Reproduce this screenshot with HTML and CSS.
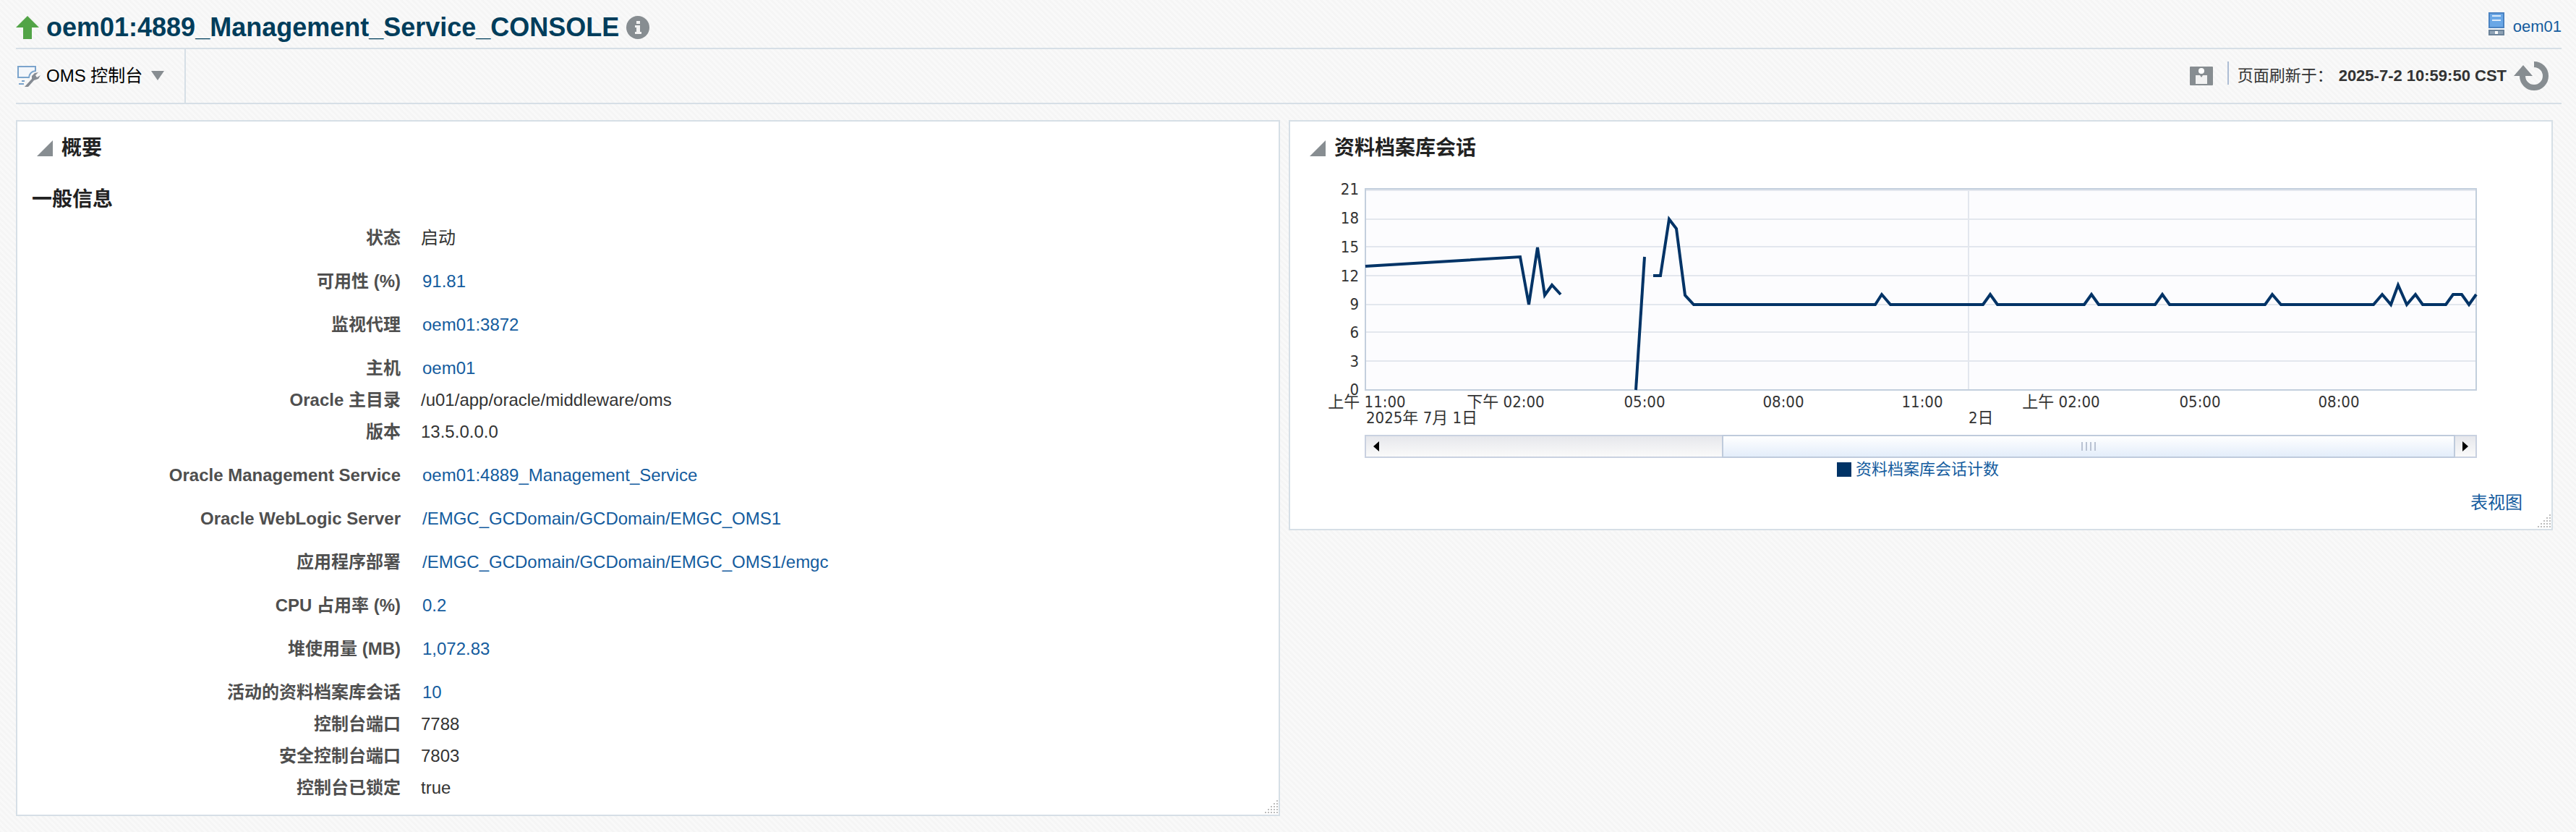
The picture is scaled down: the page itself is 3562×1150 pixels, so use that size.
FILE: index.html
```html
<!doctype html>
<html lang="zh-CN">
<head>
<meta charset="utf-8">
<title>oem01:4889_Management_Service_CONSOLE</title>
<link rel="stylesheet" href="styles.css">
</head>

<body>
<div id="page">
    <div class="header">
        <div class="title">
            <svg width="32" height="32" viewBox="0 0 32 32"><path d="M16 0L32 16H22V32H10V16H0Z" fill="#52a447"/></svg>
            <h1>oem01:4889_Management_Service_CONSOLE</h1>
            <button type="button" class="info" aria-label="目标信息">
                <svg width="32" height="32" viewBox="0 0 32 32"><circle cx="16" cy="16" r="16" fill="#878d91"/><path d="M14 7h5v4h-5zM12 13h7v9h2v3h-9v-3h2v-6h-2z" fill="#f3f3f3"/></svg>
            </button>
        </div>
        <a class="host" href="#">
            <svg width="22" height="32" viewBox="0 0 22 32">
                <rect x="1" y="1" width="20" height="20" fill="#6aa7e6" stroke="#4b83c2" stroke-width="2"/>
                <path d="M5 5h12M5 11h12" stroke="#dcebfa" stroke-width="2"/>
                <rect x="1" y="25" width="20" height="6" fill="#8ea2b5" stroke="#6a8299" stroke-width="2"/>
                <rect x="9" y="26" width="4" height="4" fill="#fff"/>
            </svg>
            <span>oem01</span>
        </a>
    </div>

    <div class="toolbar">
        <button type="button" class="menu">
            <svg width="34" height="32" viewBox="0 0 34 32">
                <path d="M17 18H3V3H27V9Q19 10 18 18Z" fill="#f3f6fa" stroke="#7ba4cc" stroke-width="2"/>
                <path d="M4 27H11M8 23H12" stroke="#7ba4cc" stroke-width="2"/>
                <path d="M12 31L22 20V16L26 12L31 11L27 15L29 18L34 15L31 20L25 22L17 31Z" fill="#858b93"/>
            </svg>
            <span>OMS 控制台</span>
            <svg class="caret" width="18" height="14" viewBox="0 0 18 14"><path d="M0 0H18L9 13Z" fill="#878d91"/></svg>
        </button>
        <div class="refresh">
            <button type="button" class="badge" aria-label="个性化页面">
                <svg width="32" height="28" viewBox="0 0 32 28">
                    <rect y="1" width="32" height="26" rx="1" fill="#878d91"/>
                    <circle cx="16" cy="7" r="4" fill="#fff"/>
                    <path d="M8 13h6l2 3 2-3h6v12h-16z" fill="#f2f2f2"/>
                </svg>
            </button>
            <span class="sep"></span>
            <span>页面刷新于：</span>
            <b>2025-7-2 10:59:50 CST</b>
            <button type="button" class="reload" aria-label="刷新">
                <svg width="48" height="42" viewBox="0 0 48 42">
                    <path d="M28 5A16 16 0 1 1 12 21" fill="none" stroke="#878d91" stroke-width="8"/>
                    <path d="M0 21L13 6L26 21Z" fill="#878d91"/>
                </svg>
            </button>
        </div>
    </div>

    <div class="panels">
        <div class="panel">
            <h2><svg width="22" height="22" viewBox="0 0 22 22"><path d="M22 0V22H0Z" fill="#878d91"/></svg>概要</h2>
            <h3>一般信息</h3>
            <table>
                <tr><th>状态</th><td>启动</td></tr>
                <tr class="lk"><th>可用性 (%)</th><td><a href="#">91.81</a></td></tr>
                <tr class="lk"><th>监视代理</th><td><a href="#">oem01:3872</a></td></tr>
                <tr class="lk"><th>主机</th><td><a href="#">oem01</a></td></tr>
                <tr><th>Oracle 主目录</th><td>/u01/app/oracle/middleware/oms</td></tr>
                <tr><th>版本</th><td>13.5.0.0.0</td></tr>
                <tr class="lk"><th>Oracle Management Service</th><td><a href="#">oem01:4889_Management_Service</a></td></tr>
                <tr class="lk"><th>Oracle WebLogic Server</th><td><a href="#">/EMGC_GCDomain/GCDomain/EMGC_OMS1</a></td></tr>
                <tr class="lk"><th>应用程序部署</th><td><a href="#">/EMGC_GCDomain/GCDomain/EMGC_OMS1/emgc</a></td></tr>
                <tr class="lk"><th>CPU 占用率 (%)</th><td><a href="#">0.2</a></td></tr>
                <tr class="lk"><th>堆使用量 (MB)</th><td><a href="#">1,072.83</a></td></tr>
                <tr class="lk"><th>活动的资料档案库会话</th><td><a href="#">10</a></td></tr>
                <tr><th>控制台端口</th><td>7788</td></tr>
                <tr><th>安全控制台端口</th><td>7803</td></tr>
                <tr><th>控制台已锁定</th><td>true</td></tr>
            </table>
            <svg class="grip" width="20" height="20" viewBox="0 0 20 20"><path d="M17 1h2M13 5h6M9 9h10M5 13h14M1 17h18" stroke="#bdbdbd" stroke-width="2" stroke-dasharray="2 2"/></svg>
        </div>

        <div class="panel">
            <h2><svg width="22" height="22" viewBox="0 0 22 22"><path d="M22 0V22H0Z" fill="#878d91"/></svg>资料档案库会话</h2>
            <svg class="chart" viewBox="0 0 1744 352">
                <rect x="104" y="14" width="1536" height="278" class="plot"/>
                <path class="grid" d="M105 16H1639M105 56H1639M105 94H1639M105 134H1639M105 174H1639M105 212H1639M105 252H1639M938 16V291"/>
                <!-- 会话计数 -->
                <path class="line" d="M104 121L318 108L330 174L342 95L352 161L362 147L374 160"/>
                <path class="line" d="M478 292L490 108"/>
                <path class="line" d="M502 134H512L524 56L534 69L546 161L558 174H809L818 160L830 174H958L968 160L978 174H1098L1108 160L1118 174H1196L1206 160L1216 174H1348L1358 160L1370 174H1498L1510 160L1522 174L1532 147L1544 174L1556 160L1566 174H1598L1608 160H1620L1630 174L1640 160"/>
                <g class="ylab">
                    <text x="95" y="22">21</text>
                    <text x="95" y="62">18</text>
                    <text x="95" y="102">15</text>
                    <text x="95" y="142">12</text>
                    <text x="95" y="181">9</text>
                    <text x="95" y="220">6</text>
                    <text x="95" y="260">3</text>
                    <text x="95" y="299">0</text>
                </g>
                <g class="xlab">
                    <text x="106" y="316">上午 11:00</text>
                    <text x="298" y="316">下午 02:00</text>
                    <text x="490" y="316">05:00</text>
                    <text x="682" y="316">08:00</text>
                    <text x="874" y="316">11:00</text>
                    <text x="1066" y="316">上午 02:00</text>
                    <text x="1258" y="316">05:00</text>
                    <text x="1450" y="316">08:00</text>
                </g>
                <text x="105" y="338">2025年 7月 1日</text>
                <text x="938" y="338">2日</text>
            </svg>
            <div class="scroll">
                <button type="button" aria-label="向左滚动"><svg width="8" height="14" viewBox="0 0 8 14"><path d="M8 0V14L0 7Z"/></svg></button>
                <div class="track"><div class="thumb" style="width:68.6%"><i></i><i></i><i></i><i></i></div></div>
                <button type="button" aria-label="向右滚动"><svg width="8" height="14" viewBox="0 0 8 14"><path d="M0 0V14L8 7Z"/></svg></button>
            </div>
            <div class="legend"><i></i><a href="#">资料档案库会话计数</a></div>
            <div class="more"><a href="#">表视图</a></div>
            <svg class="grip" width="20" height="20" viewBox="0 0 20 20"><path d="M17 1h2M13 5h6M9 9h10M5 13h14M1 17h18" stroke="#bdbdbd" stroke-width="2" stroke-dasharray="2 2"/></svg>
        </div>
    </div>
</div>
</body>
</html>
```

FILE: styles.css
```css
*{ margin:0; padding:0; box-sizing:border-box;}
body{font:24px/32px "Liberation Sans","Noto Sans CJK SC",sans-serif; color:#333; background:#f7f7f7 linear-gradient(45deg,#f5f5f5 25%,#f9f9f9 25% 50%,#f5f5f5 50% 75%,#f9f9f9 75%); background-size:8px 8px;}
a{color:#145c9e; text-decoration:none;}
button{border:0; background:none; font:inherit; color:#000; cursor:pointer;}
svg{display:block; flex:none;}
#page{padding:0 20px 16px 22px;}

.header{height:68px; display:flex; justify-content:space-between; align-items:center; border-bottom:2px solid #d6dfe6;}
.title{display:flex; align-items:center; gap:10px; padding-top:10px;}
.title h1{font-size:36px; line-height:40px; color:#003d5b;}
.host{display:flex; align-items:center; gap:12px; font-size:22px;}
.host span{padding-top:8px;}

.toolbar{height:76px; display:flex; justify-content:space-between; border-bottom:2px solid #d6dfe6;}
.menu{display:flex; align-items:center; gap:8px; padding-right:28px; border-right:2px solid #d6dfe6;}
.menu .caret{margin-left:4px;}
.refresh{display:flex; align-items:center; font-size:22px; padding-right:18px;}
.sep{width:2px; height:32px; margin:0 12px 8px 20px; background:#adbdd4;}
.refresh b{margin-left:8px;}
.reload{margin-left:10px;}

.panels{display:flex; align-items:flex-start; gap:12px; padding:22px 12px 0 0;}
.panel{flex:1; position:relative; background:#fff; border:2px solid #d6dfe6;}
.panel h2{display:flex; align-items:center; gap:12px; height:74px; padding-left:27px; font-size:28px; line-height:40px; color:#222;}
.panel h3{padding:12px 0 0 20px; font-size:28px; line-height:44px; color:#222;}
.grip{position:absolute; right:0; bottom:0;}

table{width:100%; margin:9px 0 15px; border-collapse:collapse; table-layout:fixed;}
th{width:530px; height:44px; text-align:right; color:#4f4f4f; white-space:nowrap;}
td{padding-left:28px;}
.lk th,.lk td{height:60px; padding-top:16px;}
.lk td{padding-left:30px;}

.chart{width:100%; height:auto; margin-top:5px; font:22px "DejaVu Sans Condensed","Noto Sans CJK SC",sans-serif; fill:#333;}
.plot{fill:#fcfcfe; stroke:#c3cfdd; stroke-width:2;}
.grid{fill:none; stroke:#e3e7ee; stroke-width:2;}
.line{fill:none; stroke:#003366; stroke-width:4;}
.ylab{text-anchor:end;}
.xlab{text-anchor:middle;}

.scroll{display:flex; height:32px; margin:2px 103px 0; border:2px solid #c9d1e0; background:linear-gradient(#e6e7ec,#fafafa);}
.scroll button{width:28px; display:flex; align-items:center; justify-content:center;}
.track{flex:1; display:flex; justify-content:flex-end; margin:-2px 0;}
.thumb{display:flex; align-items:center; justify-content:center; gap:4px; border:2px solid #bfcbdc; background:linear-gradient(#fff,#e3edfa);}
.thumb i{width:2px; height:12px; background:#b9c2d2;}
.legend{display:flex; align-items:center; justify-content:center; gap:6px; height:32px; padding-right:8px; font-size:22px;}
.legend i{width:20px; height:20px; background:#003366;}
.more{padding:14px 40px 20px; text-align:right;}
```
